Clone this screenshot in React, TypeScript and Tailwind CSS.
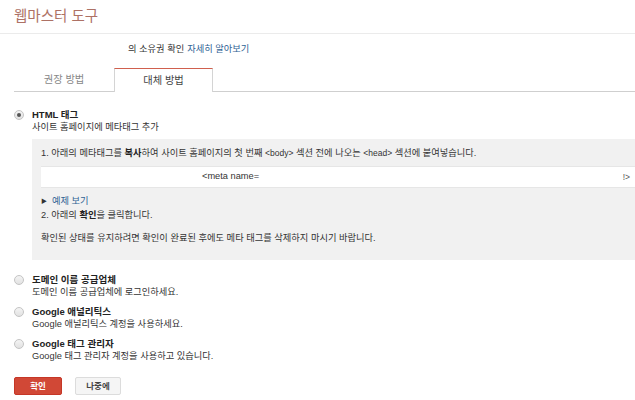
import React from "react";

const FONT = { fontFamily: '"Liberation Sans", "Noto Sans CJK KR", sans-serif' };

function Radio({ checked }: { checked?: boolean }) {
  return (
    <span className="mt-[2px] flex h-[10px] w-[10px] shrink-0 items-center justify-center rounded-full border border-[#c4c4c4] bg-gradient-to-b from-[#f4f4f4] to-[#e2e2e2]">
      {checked && <span className="h-[4px] w-[4px] rounded-full bg-[#555]" />}
    </span>
  );
}

function Option({ title, desc }: { title: string; desc: string }) {
  return (
    <div className="mt-[6px] flex gap-[8px]">
      <Radio />
      <div>
        <p className="text-[9.5px] font-bold leading-[13px] text-[#222]">{title}</p>
        <p className="text-[9.25px] leading-[13px] text-[#333]">{desc}</p>
      </div>
    </div>
  );
}

export default function App() {
  return (
    <div className="h-[400px] w-[635px] overflow-hidden bg-white" style={FONT}>
      <header className="flex h-[34px] items-center border-b border-[#ebebeb] pl-[14px]">
        <h1 className="text-[14.5px] leading-none text-[#ad7165]">웹마스터 도구</h1>
      </header>

      <div className="flex h-[34px] items-center pb-[3px] pl-[128px] text-[9.25px] text-[#333]">
        <span>의 소유권 확인</span>
        <a className="ml-[3px] text-[#2f6294]">자세히 알아보기</a>
      </div>

      <div className="ml-[14px] flex h-[24px] border-b border-[#cfcfcf]">
        <div className="flex w-[100px] items-center justify-center text-[10.25px] text-[#888]">권장 방법</div>
        <div className="-mb-px flex w-[99px] items-center justify-center border-x border-t border-[#d4d4d4] border-t-[#d0604e] bg-white text-[10.25px] text-[#444]">
          대체 방법
        </div>
      </div>

      <div className="pl-[14px] pt-[16px]">
        <div className="flex gap-[8px]">
          <Radio checked />
          <div className="flex-1">
            <p className="text-[9.5px] font-bold leading-[13px] text-[#222]">HTML 태그</p>
            <p className="text-[9.25px] leading-[13px] text-[#333]">사이트 홈페이지에 메타태그 추가</p>
          </div>
        </div>

        <div className="ml-[18px] mt-[5px] bg-[#f1f1f1] pb-[15px] pl-[9px] pt-[8px] text-[9.25px] text-[#333]">
          <p className="leading-[13px]">
            1. 아래의 메타태그를 <b className="text-[#222]">복사</b>하여 사이트 홈페이지의 첫 번째{" "}
            <span className="text-[8.5px]">&lt;body&gt;</span> 섹션 전에 나오는{" "}
            <span className="text-[8.5px]">&lt;head&gt;</span> 섹션에 붙여넣습니다.
          </p>
          <div className="mt-[6px] flex h-[22px] items-center border-y border-[#e6e6e6] bg-white">
            <span className="ml-[161px] text-[9.25px] text-[#333]">&lt;meta name=</span>
            <span className="ml-auto mr-[5px] text-[8.5px] text-[#555]">!&gt;</span>
          </div>
          <p className="mt-[7px] flex items-center leading-[13px]">
            <span className="mr-[5px] text-[6px] text-[#333]">▶</span>
            <a className="text-[#2f6294]">예제 보기</a>
          </p>
          <p className="leading-[14px]">
            2. 아래의 <b className="text-[#222]">확인</b>을 클릭합니다.
          </p>
          <p className="mt-[9px] leading-[14px]">
            확인된 상태를 유지하려면 확인이 완료된 후에도 메타 태그를 삭제하지 마시기 바랍니다.
          </p>
        </div>

        <div className="mt-[13px]">
          <Option title="도메인 이름 공급업체" desc="도메인 이름 공급업체에 로그인하세요." />
          <Option title="Google 애널리틱스" desc="Google 애널리틱스 계정을 사용하세요." />
          <Option title="Google 태그 관리자" desc="Google 태그 관리자 계정을 사용하고 있습니다." />
        </div>

        <div className="mt-[14px] flex gap-[13px]">
          <button className="h-[18px] w-[48px] rounded-[2px] border border-[#c53727] bg-[#d14836] text-[8.5px] font-bold text-white">
            확인
          </button>
          <button className="h-[18px] w-[46px] rounded-[2px] border border-[#dcdcdc] bg-[#f5f5f5] text-[8.5px] font-bold text-[#444]">
            나중에
          </button>
        </div>
      </div>
    </div>
  );
}
